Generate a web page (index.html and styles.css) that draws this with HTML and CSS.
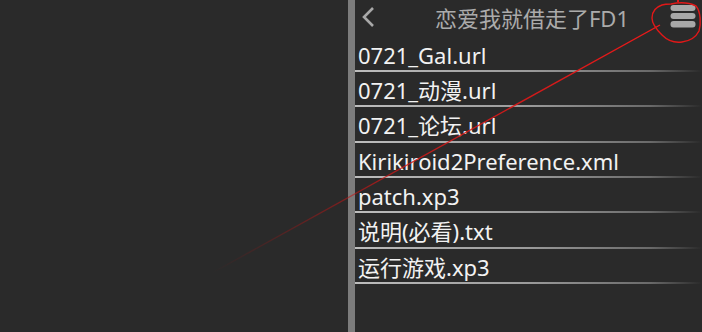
FILE: index.html
```html
<!DOCTYPE html>
<html>
<head>
<meta charset="utf-8">
<link rel="stylesheet" href="styles.css">
</head>
<body>
<div class="screen">
  <div class="blank"></div>
  <div class="scrollbar"></div>
  <div class="panel">
    <div class="header">
      <svg class="back" width="16" height="24" viewBox="0 0 16 24"><path d="M13 3 L4 12 L13 21" fill="none" stroke="#a8a8a8" stroke-width="2.6"/></svg>
      <div class="title">恋爱我就借走了FD1</div>
      <svg class="menu" width="26" height="24" viewBox="0 0 26 24"><rect x="0.5" y="1" width="25" height="6" rx="3" fill="#a8a8a8"/><rect x="0.5" y="9" width="25" height="6" rx="3" fill="#a8a8a8"/><rect x="0.5" y="17" width="25" height="6.5" rx="3" fill="#a8a8a8"/></svg>
    </div>
    <ul class="list">
      <li class="row">0721_Gal.url</li>
      <li class="row">0721_动漫.url</li>
      <li class="row">0721_论坛.url</li>
      <li class="row">Kirikiroid2Preference.xml</li>
      <li class="row">patch.xp3</li>
      <li class="row">说明(必看).txt</li>
      <li class="row">运行游戏.xp3</li>
    </ul>
  </div>
  <svg class="annot" width="702" height="332" viewBox="0 0 702 332">
    <defs>
      <linearGradient id="fade" x1="660" y1="25" x2="212" y2="273" gradientUnits="userSpaceOnUse">
        <stop offset="0" stop-color="#f01818" stop-opacity="1"/>
        <stop offset="0.55" stop-color="#d01818" stop-opacity="0.85"/>
        <stop offset="1" stop-color="#a01010" stop-opacity="0"/>
      </linearGradient>
    </defs>
    <path d="M660 25 L212 273" stroke="url(#fade)" stroke-width="1.4" fill="none"/>
    <path d="M671 4 C680 2 690 3 696 6 C701 12 701 24 699 31 C696 37 690 41 682 42 C675 43 668 41 662 35 C657 30 652 24 652 18 C652 11 656 7 662 5 C665 4 668 4 671 4 Z" stroke="#e01818" stroke-width="1.4" fill="none"/>
    <path d="M677 0 L679 0 L679 2 L677 2 Z" fill="#e01818"/>
  </svg>
</div>
</body>
</html>
```
FILE: styles.css
```css
html, body {
  margin: 0;
  padding: 0;
  background: #2a2a2a;
}
.screen {
  position: relative;
  width: 702px;
  height: 332px;
  display: flex;
  overflow: hidden;
  background: #2a2a2a;
  font-family: "Noto Sans", "Noto Sans CJK SC", sans-serif;
}
.blank {
  width: 348px;
  flex: none;
}
.scrollbar {
  width: 7px;
  flex: none;
  background: #7c7c7c;
}
.panel {
  flex: 1;
  display: flex;
  flex-direction: column;
}
.header {
  height: 36.67px;
  display: flex;
  align-items: center;
  flex: none;
  position: relative;
}
.back {
  margin-left: 5px;
  margin-top: -2px;
}
.title {
  flex: 1;
  text-align: center;
  color: #ababab;
  font-size: 22px;
  line-height: 30px;
  margin-top: -1px;
  padding-left: 18px;
}
.menu {
  margin-right: 6px;
  margin-top: -5px;
}
.list {
  list-style: none;
  margin: 0;
  padding: 0;
}
.row {
  height: 30.33px;
  line-height: 30px;
  padding-left: 3px;
  padding-top: 3px;
  padding-bottom: 2px;
  color: #f2f2f2;
  font-size: 22px;
  background: linear-gradient(to right, #bdbdbd 0%, #9a9a9a 50%, #6a6a6a 85%, rgba(90,90,90,0) 100%) bottom left / 100% 2px no-repeat;
  box-sizing: content-box;
  white-space: nowrap;
}
.annot {
  position: absolute;
  left: 0;
  top: 0;
  pointer-events: none;
}
```
